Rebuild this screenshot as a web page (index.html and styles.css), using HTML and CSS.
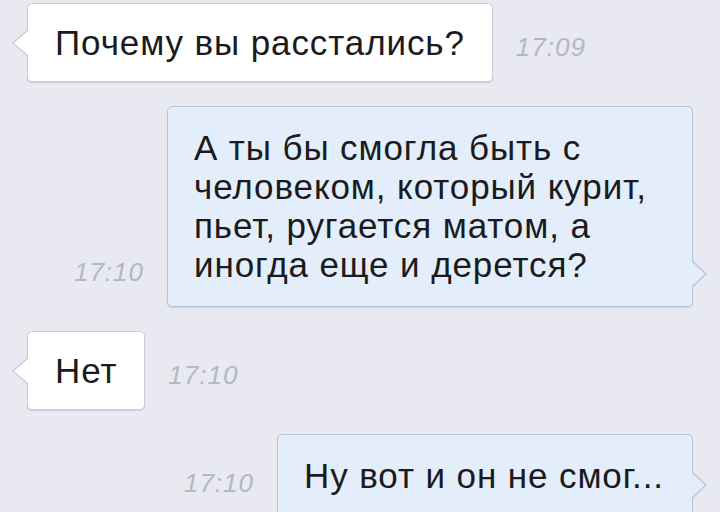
FILE: index.html
```html
<html lang="ru">

<head>
    <meta charset="UTF-8">
    <meta name="viewport" content="width=device-width, initial-scale=1.0">
    <title>Диалог</title>
    <link rel="stylesheet" href="styles.css">
</head>

<body>
    <div class="chat">
        <div class="row in">
            <div class="bubble">Почему вы расстались?</div>
            <span class="time">17:09</span>
        </div>

        <div class="row out">
            <span class="time">17:10</span>
            <div class="bubble wide">А ты бы смогла быть с<br>человеком, который курит,<br>пьет, ругается матом, а<br>иногда еще и дерется?</div>
        </div>

        <div class="row in">
            <div class="bubble">Нет</div>
            <span class="time">17:10</span>
        </div>

        <div class="row out">
            <span class="time">17:10</span>
            <div class="bubble">Ну вот и он не смог...</div>
        </div>
    </div>
</body>

</html>
```

FILE: styles.css
```css
html,
body {
    margin: 0;
    padding: 0;
}

body {
    background-color: #e9e9f1;
    color: #1b1b1d;
    font-family: "Liberation Sans", Arial, sans-serif;
    width: 720px;
    height: 512px;
    overflow: hidden;
}

.chat {
    display: flex;
    flex-direction: column;
    gap: 24px;
    padding: 3px 27px 0 27px;
}

.row {
    display: flex;
    gap: 23px;
}

.row.in {
    align-items: center;
}

.row.out {
    justify-content: flex-end;
    align-items: flex-end;
}

.bubble {
    position: relative;
    font-size: 35px;
    line-height: 39px;
    letter-spacing: 0.9px;
    padding: 19px 27px;
    border-radius: 5px;
    background-color: #ffffff;
    border: 1px solid #c9cdd7;
    box-shadow: 0 1px 1px rgba(120, 130, 150, 0.25);
}

.out .bubble {
    background-color: #e3eefa;
    border-color: #b7c6d9;
    padding: 21px 28px 22px 26px;
}

.bubble.wide {
    width: 470px;
}

/* хвостик пузыря */
.bubble::before,
.bubble::after {
    content: "";
    position: absolute;
    width: 0;
    height: 0;
    border-style: solid;
}

.in .bubble::before {
    left: -16px;
    top: 50%;
    margin-top: -14px;
    border-width: 14px 16px 14px 0;
    border-color: transparent #c9cdd7 transparent transparent;
}

.in .bubble::after {
    left: -14px;
    top: 50%;
    margin-top: -13px;
    border-width: 13px 15px 13px 0;
    border-color: transparent #ffffff transparent transparent;
}

.out .bubble::before {
    right: -15px;
    bottom: 18px;
    border-width: 14px 0 14px 15px;
    border-color: transparent transparent transparent #b7c6d9;
}

.out .bubble::after {
    right: -13px;
    bottom: 19px;
    border-width: 13px 0 13px 14px;
    border-color: transparent transparent transparent #e3eefa;
}

.time {
    font-size: 26px;
    line-height: 28px;
    font-style: italic;
    letter-spacing: 1px;
    color: #b3b8c5;
}

.in .time {
    margin-top: 8px;
}

.out .time {
    margin-bottom: 21px;
}
```
